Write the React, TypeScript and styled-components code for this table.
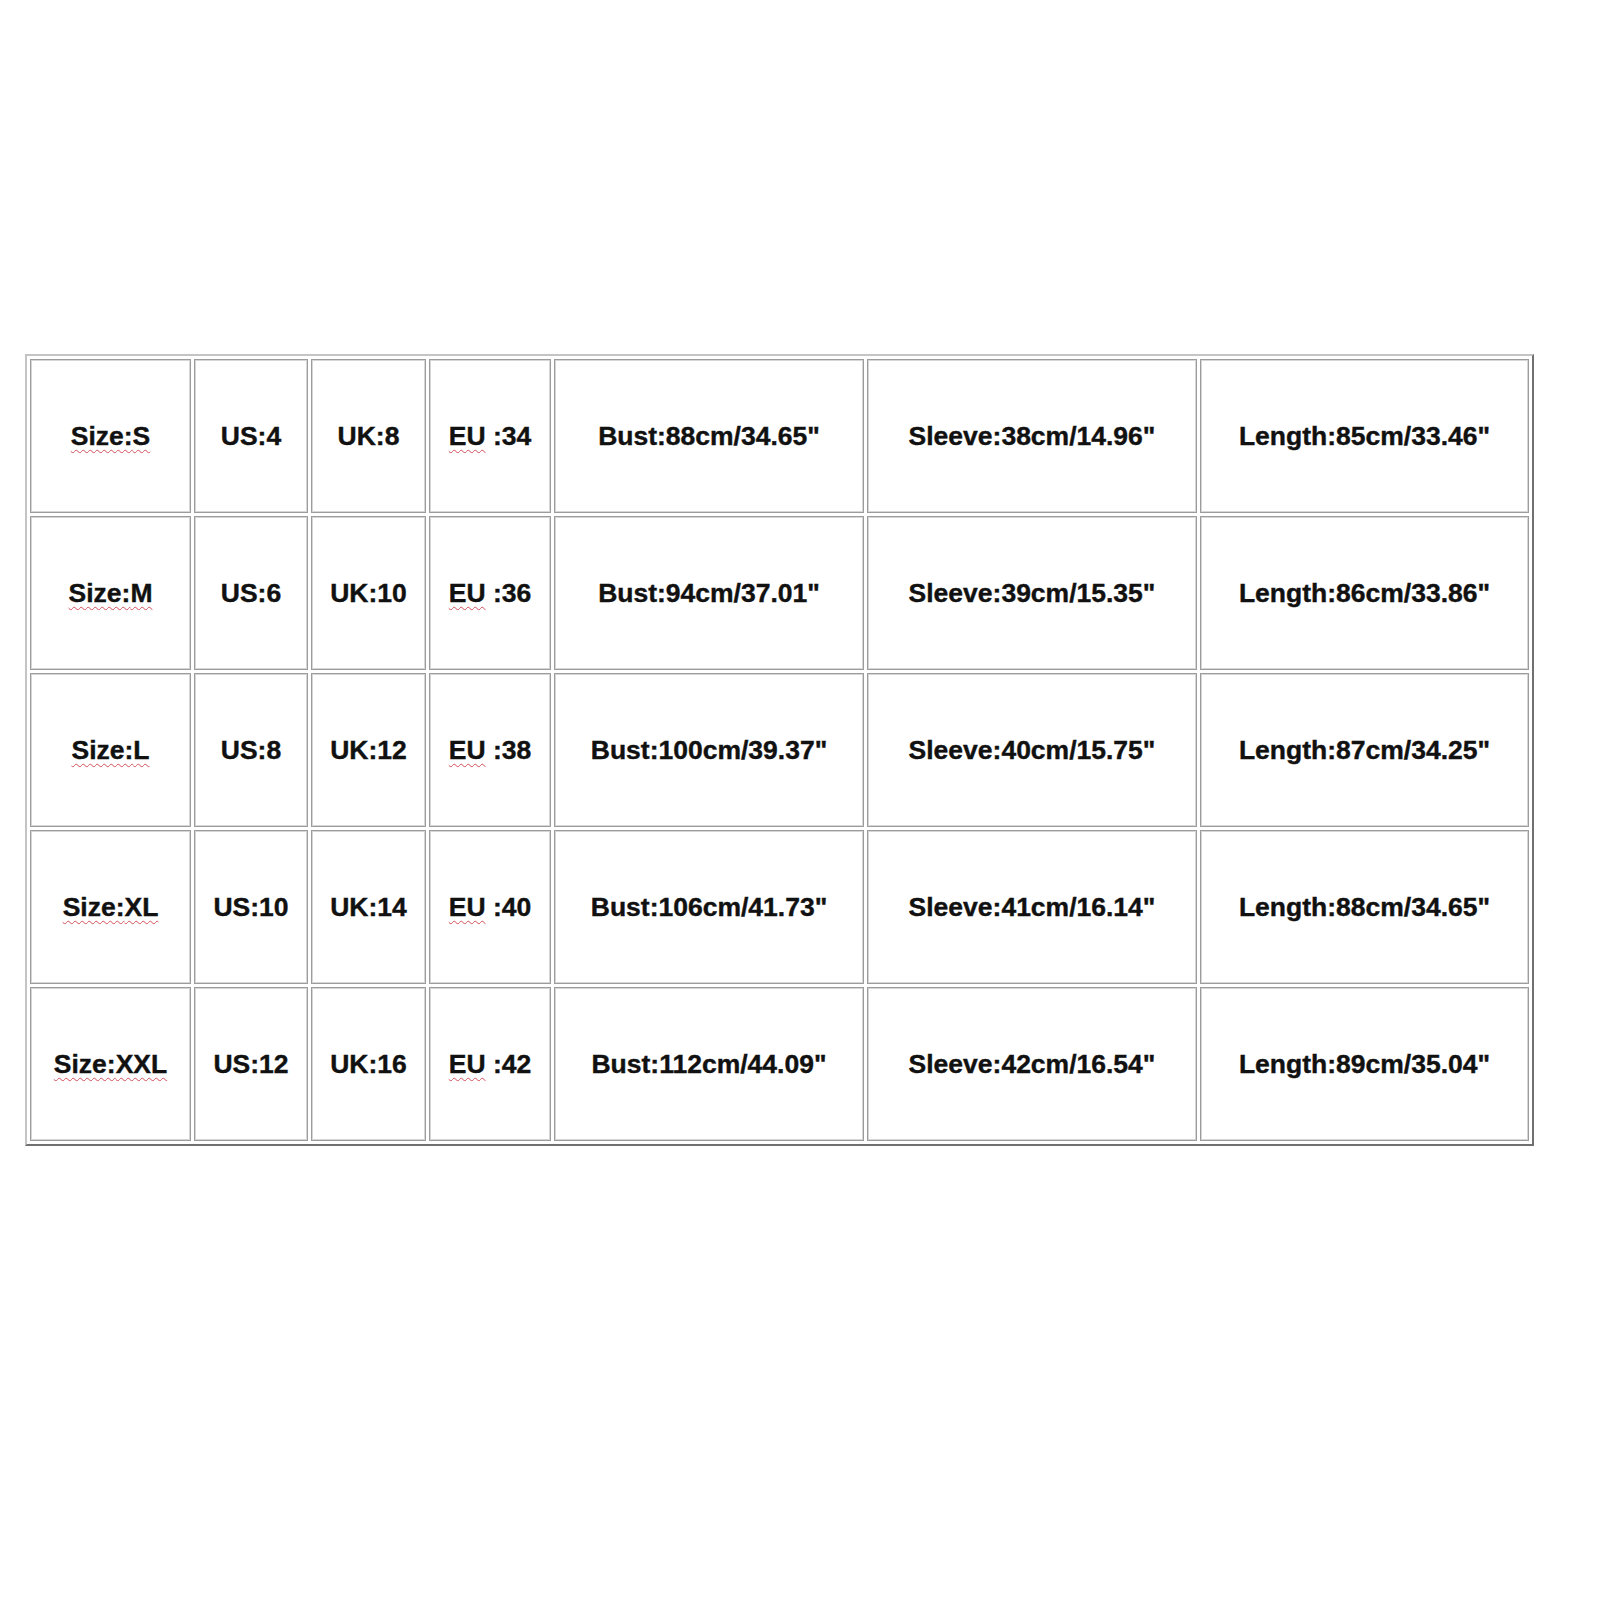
import React from 'react'
import styled, { createGlobalStyle } from 'styled-components'

const GlobalStyle = createGlobalStyle`
  html, body {
    margin: 0;
    padding: 0;
    background: #ffffff;
  }
  body {
    font-family: "Liberation Sans", Arial, sans-serif;
  }
`

const Page = styled.div`
  width: 1600px;
  height: 1600px;
  box-sizing: border-box;
  padding: 354px 0 0 25px;
  background: #fff;
`

const SizeTable = styled.div`
  display: inline-grid;
  grid-template-columns: 161px 114px 115px 122px 310px 330px 329px;
  grid-auto-rows: 154px;
  gap: 3px;
  padding: 3px;
  border: 2px outset #c4c4c4;
`

const Cell = styled.div`
  display: flex;
  align-items: center;
  justify-content: center;
  box-sizing: border-box;
  border: 1px solid #9c9c9c;
  box-shadow: inset 0 0 0 1px #d6d6d6;
  font-size: 26.5px;
  font-weight: 700;
  color: #111;
  -webkit-text-stroke: 0.4px #111;
  white-space: pre;
`

const Squiggle = styled.span`
  text-decoration: underline wavy #d2505a;
  text-decoration-thickness: 1.4px;
  text-underline-offset: 4px;
`

const rows = [
  ['S', '4', '8', '34', '88cm/34.65"', '38cm/14.96"', '85cm/33.46"'],
  ['M', '6', '10', '36', '94cm/37.01"', '39cm/15.35"', '86cm/33.86"'],
  ['L', '8', '12', '38', '100cm/39.37"', '40cm/15.75"', '87cm/34.25"'],
  ['XL', '10', '14', '40', '106cm/41.73"', '41cm/16.14"', '88cm/34.65"'],
  ['XXL', '12', '16', '42', '112cm/44.09"', '42cm/16.54"', '89cm/35.04"'],
]

export default function App() {
  return (
    <>
      <GlobalStyle />
      <Page>
        <SizeTable>
          {rows.map((r) => (
            <React.Fragment key={r[0]}>
              <Cell>
                <Squiggle>Size:{r[0]}</Squiggle>
              </Cell>
              <Cell>US:{r[1]}</Cell>
              <Cell>UK:{r[2]}</Cell>
              <Cell>
                <Squiggle>EU</Squiggle> :{r[3]}
              </Cell>
              <Cell>Bust:{r[4]}</Cell>
              <Cell>Sleeve:{r[5]}</Cell>
              <Cell>Length:{r[6]}</Cell>
            </React.Fragment>
          ))}
        </SizeTable>
      </Page>
    </>
  )
}
